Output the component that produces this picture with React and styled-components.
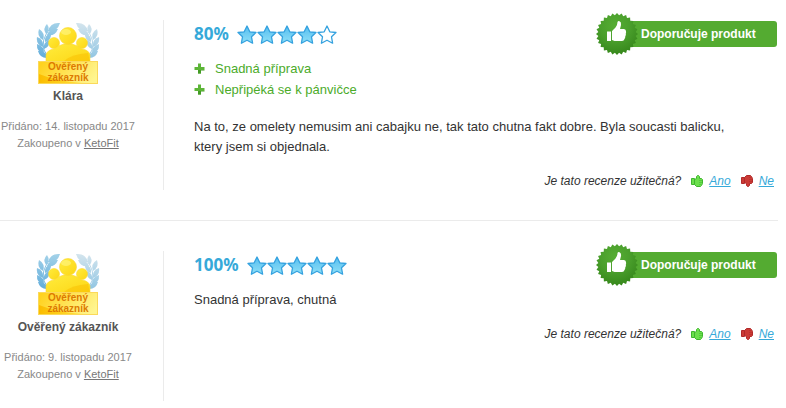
import React from "react";
import styled, { createGlobalStyle } from "styled-components";

const GlobalStyle = createGlobalStyle`
  body {
    margin: 0;
    background-color: #fff;
    color: #333;
    font-family: "Liberation Sans", Arial, sans-serif;
    font-size: 13px;
    line-height: 20px;
  }
`;

const ReviewList = styled.main`
  padding: 20px 8px 0 0;
`;

const ReviewItem = styled.article`
  display: flex;
  padding-bottom: 30px;
  margin-bottom: 30px;
  border-bottom: 1px solid #ebebeb;

  &:last-child {
    padding-bottom: 0;
    margin-bottom: 0;
    border-bottom: none;
  }
`;

const AuthorSect = styled.aside`
  width: 163px;
  flex-shrink: 0;
  border-right: 1px solid #ebebeb;
`;

const AuthorInner = styled.div`
  width: 136px;
  padding-bottom: 18px;
  display: flex;
  flex-direction: column;
  align-items: center;
  text-align: center;
`;

const BadgeSvg = styled.svg`
  width: 64px;
  height: 66px;
  display: block;
`;

const AuthorName = styled.strong`
  font-size: 12px;
  line-height: 20px;
  color: #555;
`;

const AuthorInfo = styled.p`
  margin: 12px 0 0;
  font-size: 11px;
  line-height: 17px;
  color: #888;
  white-space: nowrap;
`;

const ShopLink = styled.a`
  color: #777;
  text-decoration: underline;
`;

const ContentSect = styled.div`
  flex: 1;
  min-width: 0;
  padding: 0 0 2px 30px;
`;

const ContentHead = styled.header`
  height: 28px;
  display: flex;
  align-items: center;
`;

const Percent = styled.strong`
  font-family: "Noto Sans", "Open Sans", sans-serif;
  font-size: 17px;
  font-weight: bold;
  color: #36a9d9;
`;

const Stars = styled.div`
  display: flex;
  margin-left: 8px;
`;

const StarSvg = styled.svg`
  width: 20px;
  height: 20px;
`;

const Recommend = styled.div`
  display: flex;
  align-items: center;
  margin: 0 1px 0 auto;
  height: 26px;
  width: 160px;
  border-radius: 3px;
  background-color: #54ab31;
  color: #fff;
  font-size: 12px;
  font-weight: bold;
`;

const SealSvg = styled.svg`
  width: 42px;
  height: 42px;
  flex-shrink: 0;
  margin: 0 3px 0 -21px;
`;

const ProsList = styled.ul`
  list-style: none;
  margin: 10px 0 17px;
  padding: 0;
`;

const ProsItem = styled.li`
  display: flex;
  align-items: center;
  gap: 10px;
  line-height: 21px;
  color: #4cab2a;
`;

const PlusSvg = styled.svg`
  width: 11px;
  height: 11px;
`;

const ReviewText = styled.p`
  margin: 11px 0 0;
  max-width: 560px;
`;

const Helpful = styled.div`
  display: flex;
  justify-content: flex-end;
  align-items: center;
  gap: 10px;
  margin-top: 17px;
  padding-right: 4px;
  font-size: 12px;
  line-height: 14px;
  font-style: italic;
`;

const VoteLink = styled.a`
  display: flex;
  align-items: center;
  gap: 6px;
  color: #36a9d9;
`;

const ThumbSvg = styled.svg`
  width: 12px;
  height: 12px;
`;

const BadgeText = styled.text`
  font-family: "Liberation Sans", Arial, sans-serif;
  font-size: 10px;
  font-weight: bold;
  fill: #dd7a00;
`;

// base x, base y, tip x, tip y
const LEAVES = [
  [12, 11, 24, 3],
  [11, 15, 22, 9],
  [10, 14, 11, 4],
  [7, 20, 3, 9],
  [9, 22, 15, 13],
  [7, 27, 1, 17],
  [8, 29, 13, 20],
  [8, 34, 1, 24],
  [12, 38, 2, 31],
];

const leafPath = ([x1, y1, x2, y2]) => {
  const midX = (x1 + x2) / 2;
  const midY = (y1 + y2) / 2;
  const bendX = (y2 - y1) * 0.42;
  const bendY = (x1 - x2) * 0.42;
  return `M${x1} ${y1}Q${midX + bendX} ${midY + bendY} ${x2} ${y2}Q${
    midX - bendX
  } ${midY - bendY} ${x1} ${y1}Z`;
};

const Laurel = ({ color }) => (
  <g fill={color}>
    {LEAVES.map((leaf) => (
      <path key={leaf.join("-")} d={leafPath(leaf)} />
    ))}
    <path d="M13 10Q5 20 8 30Q10 35 14 38" fill="none" stroke={color} />
  </g>
);

const VerifiedBadge = () => (
  <BadgeSvg viewBox="0 0 64 66" role="img" aria-label="Ověřený zákazník">
    <defs>
      <linearGradient id="people" x1="0" y1="0" x2="1" y2="1">
        <stop offset="0" stopColor="#ffec3d" />
        <stop offset="1" stopColor="#fdd614" />
      </linearGradient>
      <linearGradient id="plate" x1="0" y1="0.3" x2="1" y2="0.6">
        <stop offset="0" stopColor="#ffd21f" />
        <stop offset="1" stopColor="#fff58f" />
      </linearGradient>
      <linearGradient id="plateDark">
        <stop offset="0" stopColor="#fbbc00" />
        <stop offset="1" stopColor="#ffe23a" />
      </linearGradient>
      <linearGradient id="laurelLeft" gradientUnits="userSpaceOnUse" x1="0" y1="0" x2="0" y2="38">
        <stop offset="0" stopColor="#a9d5ea" />
        <stop offset="1" stopColor="#62addb" />
      </linearGradient>
      <linearGradient id="laurelRight" gradientUnits="userSpaceOnUse" x1="0" y1="0" x2="0" y2="38">
        <stop offset="0" stopColor="#d9e7ee" />
        <stop offset="1" stopColor="#92c6e3" />
      </linearGradient>
    </defs>
    <Laurel color="url(#laurelLeft)" />
    <g transform="translate(64 0) scale(-1 1)">
      <Laurel color="url(#laurelRight)" />
    </g>
    <g fill="url(#people)" stroke="#fad635" strokeWidth="0.6">
      <circle cx="18" cy="23" r="5.5" />
      <circle cx="46" cy="23" r="5.5" />
      <path d="M10 42V35Q11 30 18 29Q23 25 28 24H36Q41 25 46 29Q53 30 54 35V42Z" />
      <circle cx="32" cy="16" r="8.5" />
    </g>
    <ellipse cx="30" cy="12" rx="5" ry="3" fill="#fff47a" opacity="0.7" />
    <path d="M28 41Q36 34 52 33L54 42Z" fill="#f9bd00" opacity="0.5" />
    <rect x="2.5" y="41.5" width="59" height="22" fill="url(#plate)" stroke="#fbd95a" />
    <path d="M3 63V54Q20 61 46 63Z" fill="url(#plateDark)" />
    <BadgeText x="32" y="50" textAnchor="middle">
      Ověřený
    </BadgeText>
    <BadgeText x="32" y="61" textAnchor="middle">
      zákazník
    </BadgeText>
  </BadgeSvg>
);

const Star = ({ filled }) => (
  <StarSvg viewBox="0 0 20 20" aria-hidden="true">
    <defs>
      <linearGradient id="starFill" x1="0" y1="0" x2="0" y2="1">
        <stop offset="0" stopColor="#55bdf0" />
        <stop offset="1" stopColor="#8fe0f7" />
      </linearGradient>
    </defs>
    <path
      d="M10 2L12.8 7.8L19 8.5L14.5 12.8L15.6 19.2L10 16.2L4.4 19.2L5.5 12.8L1 8.5L7.2 7.8Z"
      fill={filled ? "url(#starFill)" : "#fff"}
      stroke="#35a2df"
      strokeWidth="1.3"
      strokeLinejoin="round"
    />
  </StarSvg>
);

const TEETH = 28;
const sealPoints = Array.from({ length: TEETH * 2 }, (_, i) => {
  const radius = i % 2 ? 18.8 : 21;
  const angle = (i / (TEETH * 2)) * Math.PI * 2 - Math.PI / 2;
  return `${(21 + radius * Math.cos(angle)).toFixed(2)},${(
    21 +
    radius * Math.sin(angle)
  ).toFixed(2)}`;
}).join(" ");

const Seal = () => (
  <SealSvg viewBox="0 0 42 42" aria-hidden="true">
    <defs>
      <radialGradient id="seal" cx="0.45" cy="0.3" r="0.7">
        <stop offset="0" stopColor="#56ad33" />
        <stop offset="0.5" stopColor="#4a9f2c" />
        <stop offset="1" stopColor="#36871b" />
      </radialGradient>
    </defs>
    <polygon points={sealPoints} fill="url(#seal)" />
    <path
      d="M11 18.5H15V28H11ZM16 18L19.5 14.5Q21.5 12 21.5 9Q22 7.8 23.5 8.2Q25.5 9 25 12L24 16H28Q30 16.3 30 18.2Q30.3 19.5 29.8 20.5Q30.2 22 29.3 23.2Q29.4 25 28.5 26Q28 28 26 28H18.5L16 27Z"
      fill="#fff"
    />
  </SealSvg>
);

const Plus = () => (
  <PlusSvg viewBox="0 0 11 11" aria-hidden="true">
    <path d="M4 0.5H7V4H10.5V7H7V10.5H4V7H0.5V4H4Z" fill="#5cb537" />
    <path d="M4 7H10.5V7.5H7V10.5H4Z" fill="#449b25" />
  </PlusSvg>
);

const Thumb = ({ down }) => (
  <ThumbSvg viewBox="0 0 12 12" aria-hidden="true">
    <g
      transform={down ? "translate(0 12) scale(1 -1)" : undefined}
      fill={down ? "#cb3b36" : "#6bdf4c"}
      stroke={down ? "#b02a2a" : "#3fb52f"}
    >
      <path d="M3.5 4.5L5.5 3.5V1.5L6.5 0.5H7.5L8.5 1.5V3.5H10.5L11.5 4.5V8.5L10.5 10.5L9.5 11.5H5.5L3.5 9.5Z" />
      <path d="M0.5 3.5H3.5V9.5H0.5Z" />
      <path d="M8 5.5H11M8 7.5H11M8 9.5H10" strokeWidth="0.5" />
    </g>
  </ThumbSvg>
);

const reviews = [
  {
    id: 1,
    name: "Klára",
    date: "14. listopadu 2017",
    percent: 80,
    pros: ["Snadná příprava", "Nepřipéká se k pánvičce"],
    text: "Na to, ze omelety nemusim ani cabajku ne, tak tato chutna fakt dobre. Byla soucasti balicku, ktery jsem si objednala.",
  },
  {
    id: 2,
    name: "Ověřený zákazník",
    date: "9. listopadu 2017",
    percent: 100,
    pros: [],
    text: "Snadná příprava, chutná",
  },
];

const Review = ({ data }) => (
  <ReviewItem>
    <AuthorSect>
      <AuthorInner>
        <VerifiedBadge />
        <AuthorName>{data.name}</AuthorName>
        <AuthorInfo>
          Přidáno: {data.date}
          <br />
          Zakoupeno v <ShopLink href="#ketofit">KetoFit</ShopLink>
        </AuthorInfo>
      </AuthorInner>
    </AuthorSect>

    <ContentSect>
      <ContentHead>
        <Percent>{data.percent}%</Percent>
        <Stars>
          {[20, 40, 60, 80, 100].map((step) => (
            <Star key={step} filled={data.percent >= step} />
          ))}
        </Stars>
        <Recommend>
          <Seal />
          Doporučuje produkt
        </Recommend>
      </ContentHead>
      {data.pros.length > 0 && (
        <ProsList>
          {data.pros.map((item) => (
            <ProsItem key={item}>
              <Plus />
              {item}
            </ProsItem>
          ))}
        </ProsList>
      )}
      <ReviewText>{data.text}</ReviewText>
      <Helpful>
        <span>Je tato recenze užitečná?</span>
        <VoteLink href="#ano">
          <Thumb />
          Ano
        </VoteLink>
        <VoteLink href="#ne">
          <Thumb down />
          Ne
        </VoteLink>
      </Helpful>
    </ContentSect>
  </ReviewItem>
);

export default function App() {
  return (
    <>
      <GlobalStyle />
      <ReviewList>
        {reviews.map((data) => (
          <Review key={data.id} data={data} />
        ))}
      </ReviewList>
    </>
  );
}
